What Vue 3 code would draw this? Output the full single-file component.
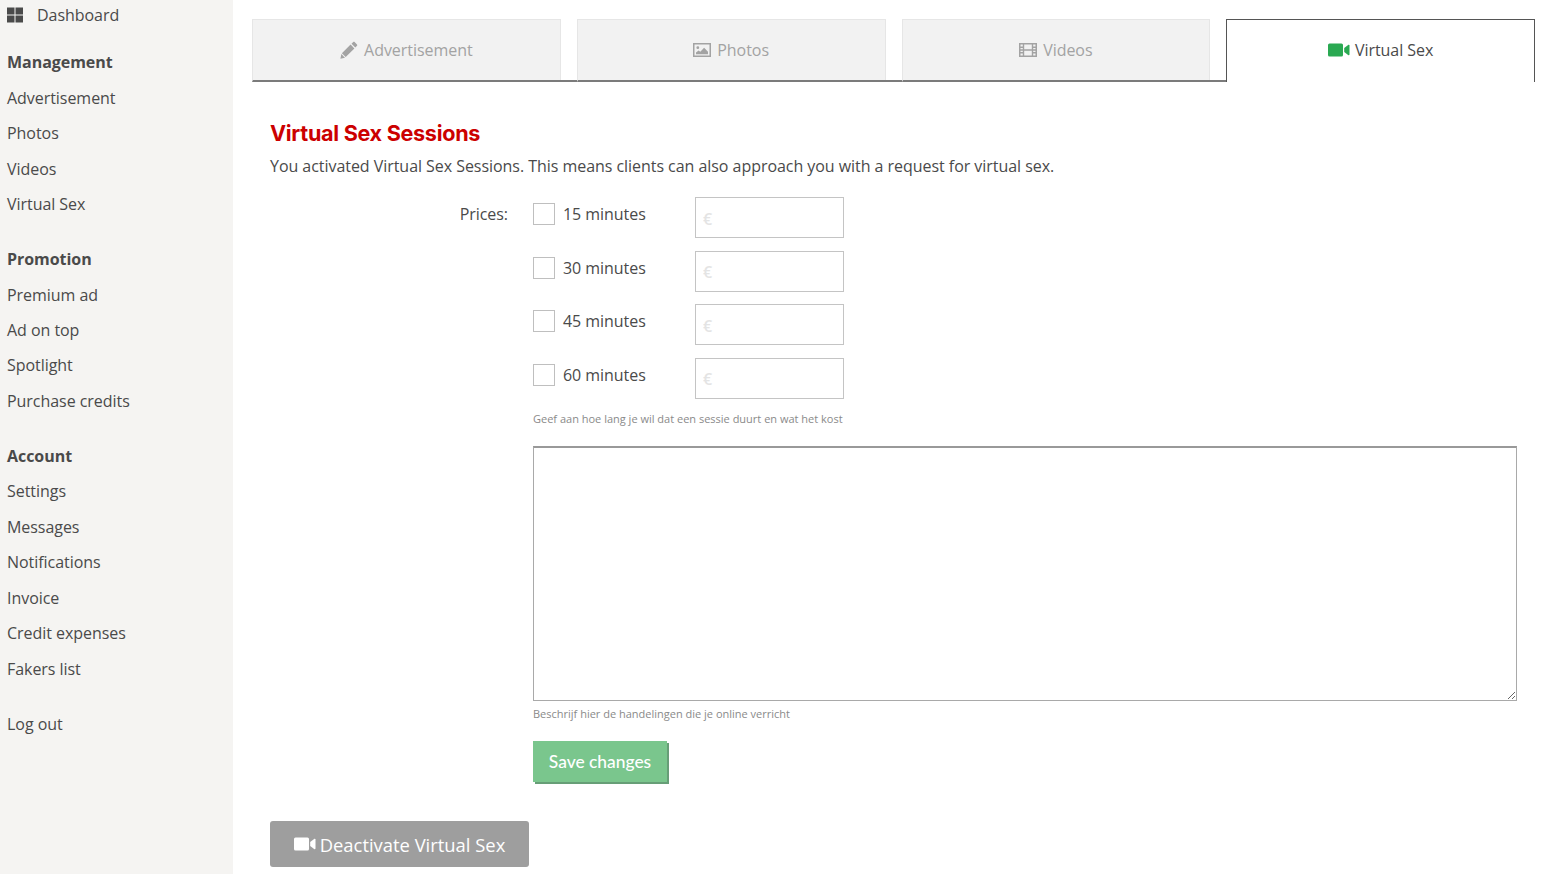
<script setup>
const groups = [
  { title: 'Management', items: ['Advertisement', 'Photos', 'Videos', 'Virtual Sex'] },
  { title: 'Promotion', items: ['Premium ad', 'Ad on top', 'Spotlight', 'Purchase credits'] },
  { title: 'Account', items: ['Settings', 'Messages', 'Notifications', 'Invoice', 'Credit expenses', 'Fakers list'] }
]
const prices = ['15 minutes', '30 minutes', '45 minutes', '60 minutes']
</script>

<template>
  <div class="page">
    <aside class="side">
      <div class="dash">
        <svg class="dash-ico" viewBox="0 0 16 16" width="16" height="16"><path d="M0 .5h7.5v7H0zM8.5 .5H16v7H8.5zM0 8.5h7.5v7H0zM8.5 8.5H16v7H8.5z" fill="#4a4a4a"/></svg>
        <span>Dashboard</span>
      </div>
      <section v-for="g in groups" :key="g.title" class="group">
        <div class="g-title">{{ g.title }}</div>
        <div v-for="i in g.items" :key="i" class="g-item">{{ i }}</div>
      </section>
      <div class="g-item logout">Log out</div>
    </aside>

    <main class="main">
      <nav class="tabs">
        <div class="tab">
          <svg viewBox="0 0 18 18" width="18" height="18"><path d="M13.2 1c.4-.4 1-.4 1.4 0l2.4 2.4c.4.4.4 1 0 1.4l-1.7 1.7-3.8-3.8zM10.6 3.6l3.8 3.8-8.7 8.7-3.8-3.8z" fill="#a3a3a3"/><path d="M1.3 13l3.7 3.7-4.6 1.1z" fill="#a3a3a3"/></svg>
          <span>Advertisement</span>
        </div>
        <div class="tab">
          <svg viewBox="0 0 18 14" width="18" height="14"><rect x=".75" y=".75" width="16.5" height="12.5" fill="none" stroke="#a3a3a3" stroke-width="1.5"/><circle cx="4.8" cy="4.7" r="1.4" fill="#a3a3a3"/><path d="M3 11.2V9.6l2.6-2.2 1.7 1.3 3.8-3.9 3.9 3.9v2.5z" fill="#a3a3a3"/></svg>
          <span>Photos</span>
        </div>
        <div class="tab">
          <svg viewBox="0 0 18 14" width="18" height="14"><rect x=".75" y=".75" width="16.5" height="12.5" fill="none" stroke="#a3a3a3" stroke-width="1.5"/><path d="M4.5 1v12M13.5 1v12M1 4.2h3.5M1 7h3.5M1 9.8h3.5M13.5 4.2H17M13.5 7H17M13.5 9.8H17M4.5 7h9" stroke="#a3a3a3" stroke-width="1.4" fill="none"/></svg>
          <span>Videos</span>
        </div>
        <div class="tab active">
          <svg viewBox="0 0 22 14" width="22" height="14"><rect x="0" y="0.5" width="15" height="13" rx="1.5" fill="#2aa952"/><path d="M16.2 5l3.9-3c.6-.4 1.4-.1 1.4.6v8.8c0 .7-.8 1-1.4.6l-3.9-3z" fill="#2aa952"/></svg>
          <span>Virtual Sex</span>
        </div>
      </nav>

      <div class="content">
        <h1 class="title">Virtual Sex Sessions</h1>
        <p class="intro">You activated Virtual Sex Sessions. This means clients can also approach you with a request for virtual sex.</p>

        <div class="form">
          <div class="label">Prices:</div>
          <div class="fields">
            <div v-for="p in prices" :key="p" class="price">
              <span class="check"></span>
              <span class="p-name">{{ p }}</span>
              <input class="p-input" type="text" placeholder="€" />
            </div>
            <div class="hint first">Geef aan hoe lang je wil dat een sessie duurt en wat het kost</div>
            <textarea class="area"></textarea>
            <div class="hint">Beschrijf hier de handelingen die je online verricht</div>
            <button class="save" type="button">Save changes</button>
          </div>
        </div>

        <button class="deact" type="button">
          <svg viewBox="0 0 22 14" width="22" height="14"><rect x="0" y="0.5" width="15" height="13" rx="1.5" fill="#fff"/><path d="M16.2 5l3.9-3c.6-.4 1.4-.1 1.4.6v8.8c0 .7-.8 1-1.4.6l-3.9-3z" fill="#fff"/></svg>
          <span>Deactivate Virtual Sex</span>
        </button>
      </div>
    </main>
  </div>
</template>

<style>
html, body { margin: 0; background: #fff; overflow: hidden; }
</style>

<style scoped>
.page {
  display: flex;
  height: 874px;
  overflow: hidden;
  font-family: "Open Sans", sans-serif;
  font-size: 16px;
  letter-spacing: -0.045px;
  color: #4a4a4a;
}
.side {
  flex: 0 0 233px;
  background: #f5f4f2;
  padding: 0 0 0 7px;
  box-sizing: border-box;
}
.dash {
  display: flex;
  align-items: center;
  gap: 14px;
  height: 30px;
}
.dash-ico { flex: none; }
.group { margin-bottom: 19.6px; }
.g-title {
  font-weight: 700;
  line-height: 35.45px;
}
.group:first-of-type { margin-top: 15.25px; }
.g-item { line-height: 35.45px; }
.main {
  flex: 1;
  min-width: 0;
  padding: 19px 9px 0 19px;
}
.tabs {
  display: grid;
  grid-template-columns: repeat(4, 1fr);
  column-gap: 16px;
  height: 63px;
}
.tab {
  display: flex;
  align-items: center;
  justify-content: center;
  gap: 6px;
  background: #f2f2f2;
  border: 1px solid #e6e6e6;
  border-bottom: 2px solid #7b7b7b;
  box-sizing: border-box;
  color: #a3a3a3;
  position: relative;
}
.tab::after {
  content: "";
  position: absolute;
  left: 100%;
  bottom: -2px;
  width: 17px;
  height: 2px;
  background: #7b7b7b;
}
.tab.active {
  background: #fff;
  border: 1.5px solid #555;
  border-bottom: 0;
  padding-bottom: 2px;
  gap: 5px;
  color: #4a4a4a;
}
.tab.active::after { display: none; }
.content { padding: 0 0 0 18px; }
.title {
  margin: 35.5px 0 0;
  font-family: Inter, sans-serif;
  font-size: 21.6px;
  font-weight: 700;
  line-height: 30px;
  letter-spacing: -0.3px;
  color: #cc0000;
}
.intro {
  margin: 6.5px 0 0;
  line-height: 24px;
}
.form { display: flex; margin-top: 19px; }
.label {
  flex: 0 0 238px;
  text-align: right;
  line-height: 24px;
  padding-top: 5px;
  box-sizing: border-box;
}
.fields { margin-left: 25px; flex: 1; min-width: 0; padding-right: 18px; }
.price {
  display: flex;
  align-items: center;
  height: 41px;
  margin-bottom: 12.5px;
}
.check {
  width: 22px;
  height: 22px;
  box-sizing: border-box;
  border: 1px solid #bfbfbf;
  background: #fff;
  margin-top: -7px;
}
.p-name {
  width: 140px;
  padding-left: 8px;
  box-sizing: border-box;
  margin-top: -6.4px;
}
.p-input {
  width: 149px;
  height: 41px;
  box-sizing: border-box;
  border: 1px solid #c4c4c4;
  padding: 2px 7px 0;
  font: 600 16px "Open Sans", sans-serif;
  outline: none;
}
.p-input::placeholder { color: #e4e4e4; }
.hint {
  font-size: 11px;
  line-height: 16px;
  letter-spacing: 0;
  color: #8a8a8a;
  margin-top: 5px;
}
.hint.first { margin-top: 0; }
.area {
  display: block;
  width: 100%;
  height: 255px;
  box-sizing: border-box;
  border: 1px solid #a9a9a9;
  border-top: 2px solid #999;
  margin: 19px 0 0;
  outline: none;
  background: #fff;
}
.save {
  display: block;
  margin-top: 19px;
  width: 134px;
  height: 41px;
  padding: 0;
  border: 0;
  background: #7ac68d;
  color: #fff;
  font: 500 17.4px Lato, sans-serif;
  box-shadow: 2px 2px 0 #679e77;
}
.deact {
  display: flex;
  align-items: center;
  justify-content: center;
  gap: 4px;
  margin-top: 39px;
  width: 259px;
  height: 46px;
  padding: 0;
  border: 0;
  border-radius: 3px;
  background: #9e9e9e;
  color: #fff;
  font: 18.4px "Open Sans", sans-serif;
}
</style>
